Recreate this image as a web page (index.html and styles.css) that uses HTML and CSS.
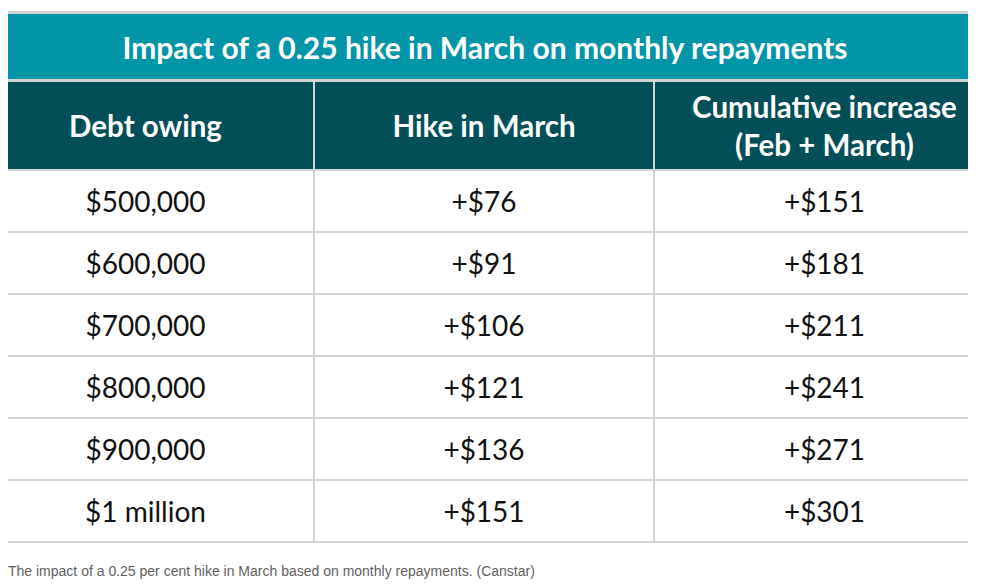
FILE: index.html
```html
<!DOCTYPE html>
<html>
<head>
<meta charset="utf-8">
<link rel="stylesheet" href="styles.css">
</head>
<body>
<div class="page">
  <div class="table">
    <div class="title">Impact of a 0.25 hike in March on monthly repayments</div>
    <div class="row head">
      <div class="cell c1">Debt owing</div>
      <div class="cell c2">Hike in March</div>
      <div class="cell c3">Cumulative increase<br>(Feb + March)</div>
    </div>
    <div class="row"><div class="cell c1">$500,000</div><div class="cell c2">+$76</div><div class="cell c3">+$151</div></div>
    <div class="row"><div class="cell c1">$600,000</div><div class="cell c2">+$91</div><div class="cell c3">+$181</div></div>
    <div class="row"><div class="cell c1">$700,000</div><div class="cell c2">+$106</div><div class="cell c3">+$211</div></div>
    <div class="row"><div class="cell c1">$800,000</div><div class="cell c2">+$121</div><div class="cell c3">+$241</div></div>
    <div class="row"><div class="cell c1">$900,000</div><div class="cell c2">+$136</div><div class="cell c3">+$271</div></div>
    <div class="row"><div class="cell c1">$1 million</div><div class="cell c2">+$151</div><div class="cell c3">+$301</div></div>
  </div>
  <p class="caption">The impact of a 0.25 per cent hike in March based on monthly repayments. (Canstar)</p>
</div>
</body>
</html>
```
FILE: styles.css
```css
html, body {
  margin: 0;
  padding: 0;
  background: #ffffff;
}
.page {
  padding: 11px 0 0 8px;
}
.table {
  width: 960px;
  font-family: Lato, "Open Sans", sans-serif;
}
.title {
  height: 65px;
  background: #0295a8;
  border-top: 3px solid #d4d4d4;
  border-bottom: 3px solid #d4d4d4;
  color: #ffffff;
  font-weight: 700;
  font-size: 30px;
  display: flex;
  align-items: center;
  justify-content: center;
  padding-right: 6px;
}
.row {
  display: flex;
  height: 60px;
  border-bottom: 2px solid #d4d4d4;
  color: #111111;
  font-size: 28px;
}
.row.head {
  height: 87px;
  background: #024f58;
  color: #ffffff;
  font-weight: 700;
  font-size: 29.5px;
  line-height: 38px;
}
.cell {
  display: flex;
  align-items: center;
  justify-content: center;
  text-align: center;
  box-sizing: border-box;
}
.c1 {
  width: 305px;
  padding-right: 30px;
}
.c2 {
  width: 340px;
  border-left: 2px solid #d4d4d4;
}
.c3 {
  width: 315px;
  border-left: 2px solid #d4d4d4;
  padding-left: 26px;
}
.caption {
  margin: 20px 0 0 0;
  font-family: "Liberation Sans", Arial, sans-serif;
  font-size: 14px;
  line-height: 17px;
  color: #5f5f5f;
}
```
